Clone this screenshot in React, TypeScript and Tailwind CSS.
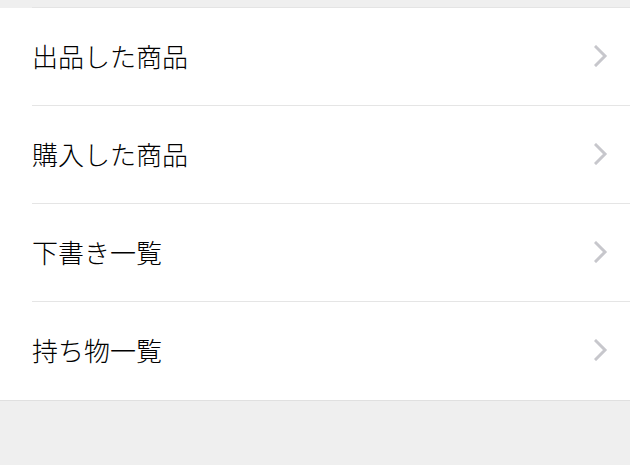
import React from "react";

const items = ["出品した商品", "購入した商品", "下書き一覧", "持ち物一覧"];

function Chevron() {
  return (
    <svg width="14" height="22" viewBox="0 0 14 22" fill="none" className="shrink-0">
      <polyline points="2,2 11,11 2,20" stroke="#c7c7cc" strokeWidth="3" strokeLinecap="square" fill="none" />
    </svg>
  );
}

export default function App() {
  return (
    <div
      className="w-[630px] h-[465px] overflow-hidden bg-[#efefef]"
      style={{ fontFamily: '"Noto Sans CJK JP", "Noto Sans", sans-serif' }}
    >
      <div className="h-[8px] bg-[#efefef] flex items-end">
        <div className="w-[32px]" />
        <div className="flex-1 h-px bg-[#e4e4e4]" />
      </div>
      <div className="bg-white border-b border-[#e0e0e0]">
        {items.map((t, i) => (
          <div key={t} className="pl-[32px]">
            <div
              className={
                "h-[98px] flex items-center justify-between pr-[22px] pb-[2px] " +
                (i < items.length - 1 ? "border-b border-[#e5e5e5]" : "")
              }
            >
              <span className="text-[26px] leading-none text-black font-light">{t}</span>
              <Chevron />
            </div>
          </div>
        ))}
      </div>
    </div>
  );
}
